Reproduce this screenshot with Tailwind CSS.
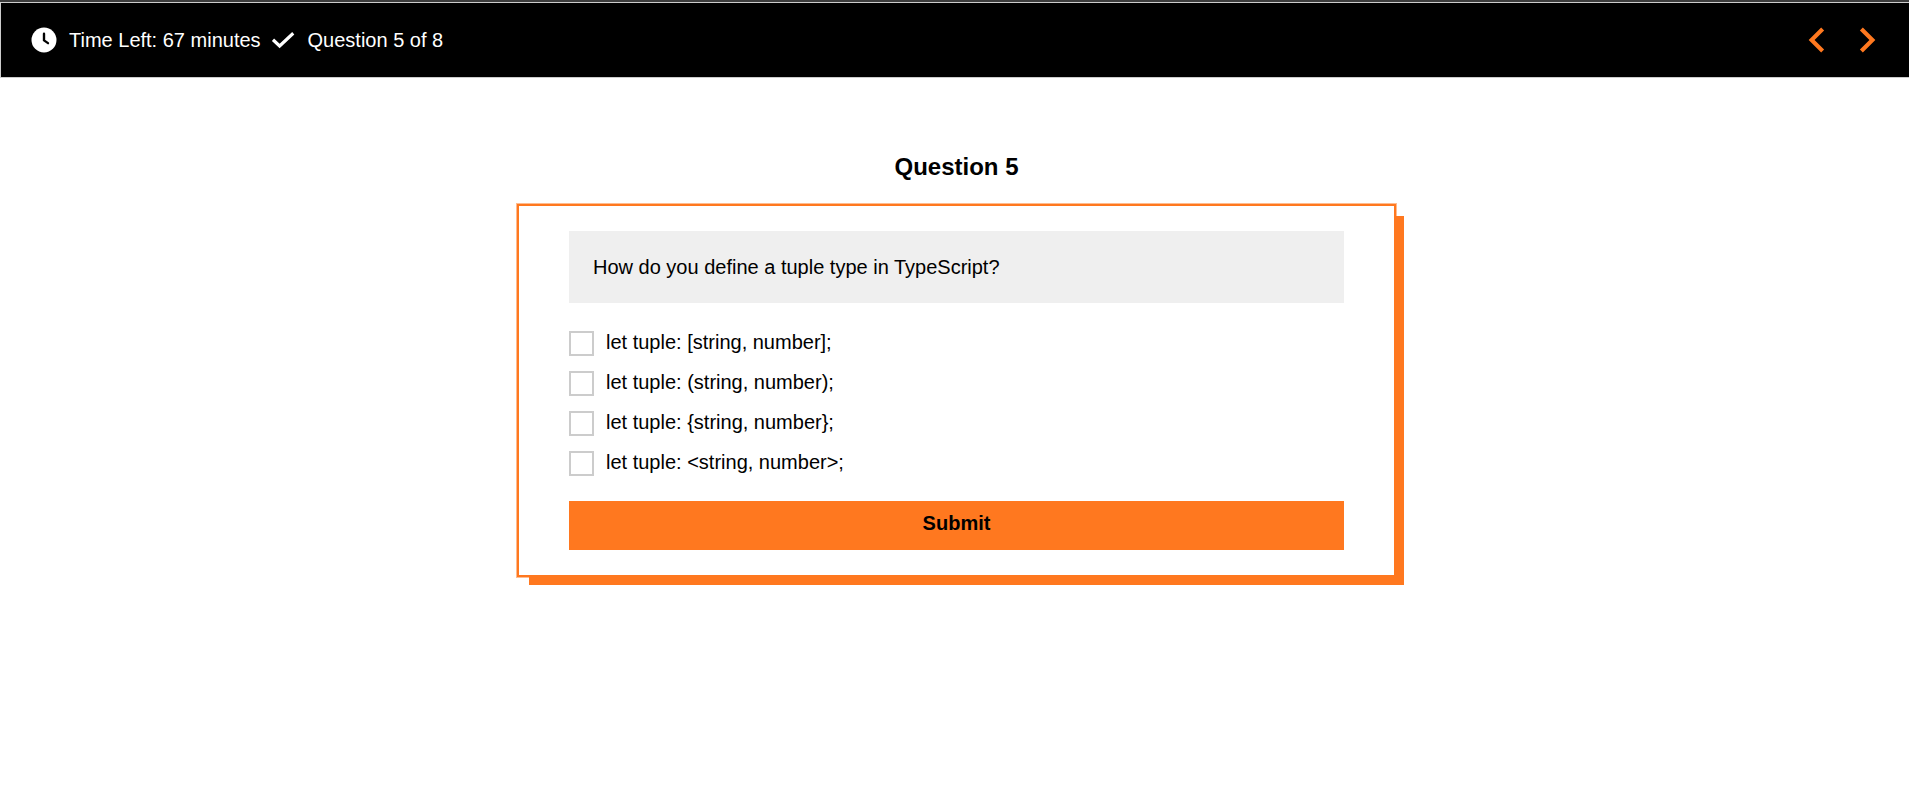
<!DOCTYPE html>
<html lang="en">
<head>
<meta charset="utf-8">
<meta name="viewport" content="width=device-width, initial-scale=1">
<title>Question 5</title>
<script src="https://cdn.jsdelivr.net/npm/@tailwindcss/browser@4"></script>
</head>
<body class="min-h-screen border-t-2 border-[#3c3c3c] bg-white font-['Liberation_Sans',Arial,sans-serif] text-xl leading-6 text-black">
  <header class="flex items-center justify-between border-y border-l border-[#ccc] bg-black py-3 pr-[17px] pl-7 text-white">
    <div class="flex items-center gap-[7px]">
      <div class="flex items-center gap-[10px]">
        <svg class="size-[30px]" viewBox="0 0 24 24" aria-hidden="true"><circle cx="12" cy="12" r="10" fill="currentColor"/><path d="M12 7v5.300l3.200 2.200" fill="none" stroke="#000" stroke-width="1.900" stroke-linecap="round" stroke-linejoin="round"/></svg>
        <span>Time Left: 67 minutes</span>
      </div>
      <div class="flex items-center gap-[10px]">
        <svg class="size-[30px]" viewBox="0 0 24 24" fill="none" stroke="currentColor" stroke-width="2.500" aria-hidden="true"><path d="M4 11.800l5.300 5L20.200 6.600"/></svg>
        <span>Question 5 of 8</span>
      </div>
    </div>
    <nav class="flex text-[#ff781f]" aria-label="Questions">
      <button type="button" aria-label="Previous question"><svg class="size-[50px]" viewBox="0 0 24 24" fill="currentColor"><path d="M15.410 7.410 14 6l-6 6 6 6 1.410-1.410L10.830 12z"/></svg></button>
      <button type="button" aria-label="Next question"><svg class="size-[50px]" viewBox="0 0 24 24" fill="currentColor"><path d="M10 6 8.590 7.410 13.170 12l-4.580 4.590L10 18l6-6z"/></svg></button>
    </nav>
  </header>
  <main class="flex flex-col items-center pt-[75px] pl-1">
    <h1 class="text-2xl leading-7 font-bold">Question 5</h1>
    <form class="mt-[23px] w-full max-w-[879px] border-2 border-[#ff781f] px-[50px] py-[25px] shadow-[10px_10px_0_-2px_#ff781f,0_0_0_1px_#ffbc8f]">
      <fieldset>
        <legend class="w-full bg-[#efefef] px-6 py-6">How do you define a tuple type in TypeScript?</legend>
        <div class="mt-7 flex flex-col gap-[15px]">
          <label class="flex gap-3"><input type="checkbox" class="size-[25px] appearance-none border-2 border-[#ccc] checked:bg-[#ff781f]"><span class="leading-[22px]">let tuple: [string, number];</span></label>
          <label class="flex gap-3"><input type="checkbox" class="size-[25px] appearance-none border-2 border-[#ccc] checked:bg-[#ff781f]"><span class="leading-[22px]">let tuple: (string, number);</span></label>
          <label class="flex gap-3"><input type="checkbox" class="size-[25px] appearance-none border-2 border-[#ccc] checked:bg-[#ff781f]"><span class="leading-[22px]">let tuple: {string, number};</span></label>
          <label class="flex gap-3"><input type="checkbox" class="size-[25px] appearance-none border-2 border-[#ccc] checked:bg-[#ff781f]"><span class="leading-[22px]">let tuple: &lt;string, number&gt;;</span></label>
        </div>
      </fieldset>
      <button type="submit" class="mt-[25px] block w-full bg-[#ff781f] pt-[10px] pb-[15px] font-bold">Submit</button>
    </form>
  </main>
</body>
</html>
